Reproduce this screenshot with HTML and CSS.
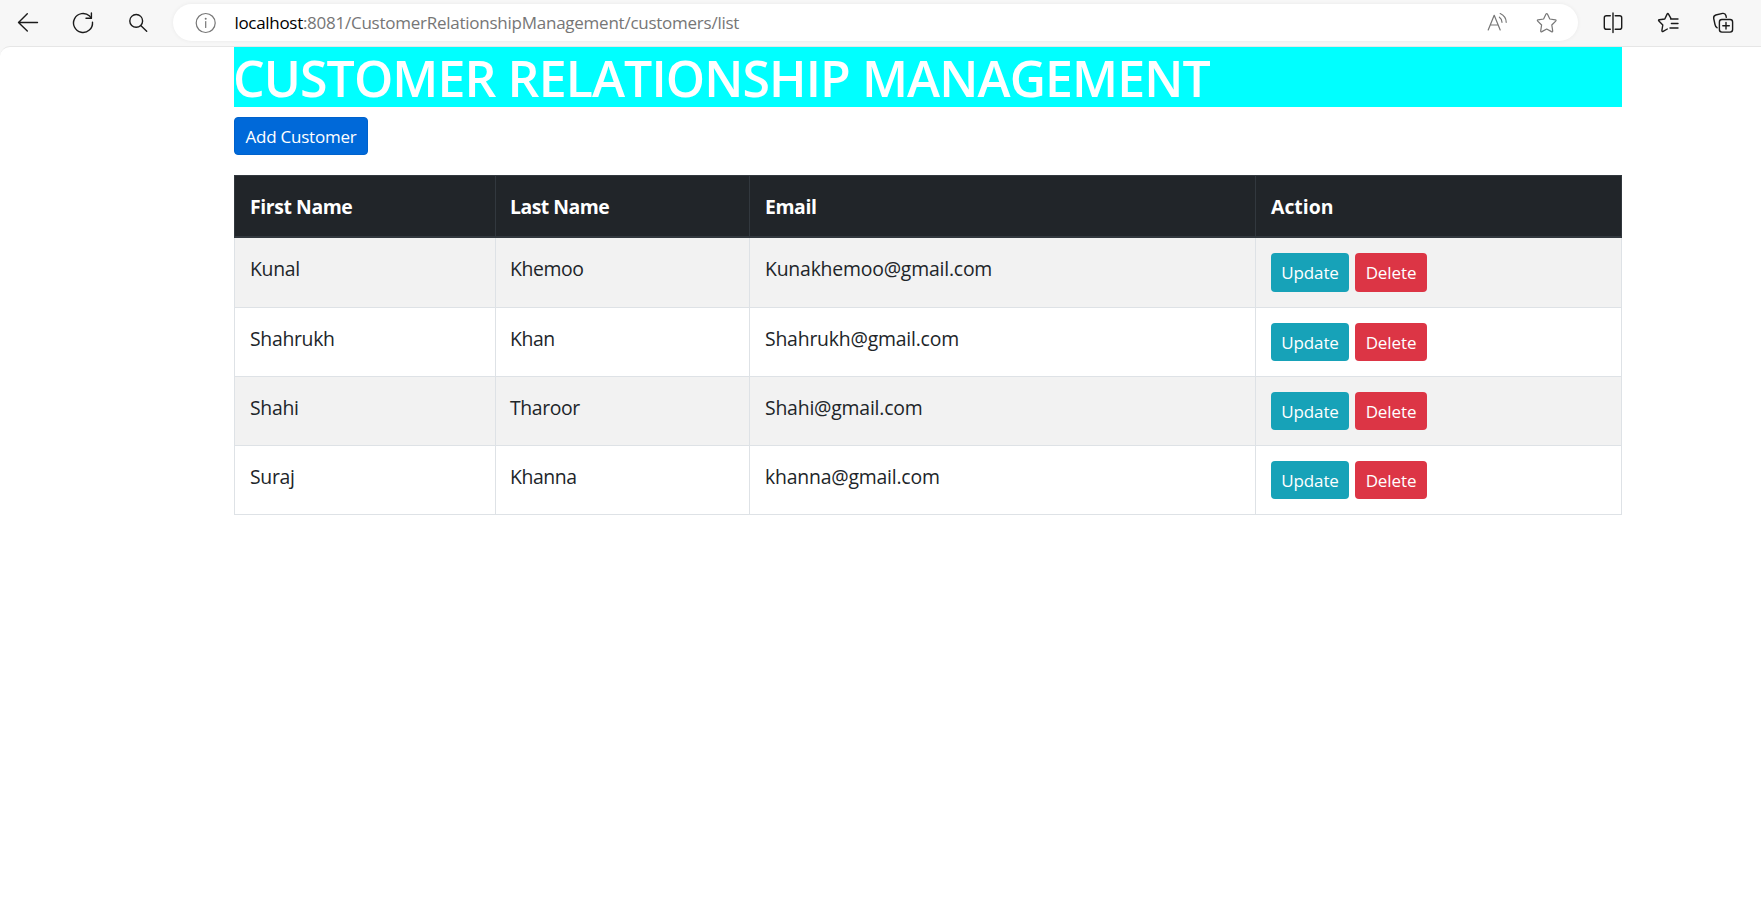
FILE: index.html
```html
<!DOCTYPE html>
<html lang="en">
<head>
<meta charset="utf-8">
<title>Customer Relationship Management</title>
<link rel="stylesheet" href="styles.css">
</head>
<body>
<header class="toolbar">
  <svg class="icon" viewBox="0 0 24 24"><path d="M21.5 11.5H2.5M11.3 2.7L2.5 11.5L11.3 20"/></svg>
  <svg class="icon" viewBox="0 0 24 24"><path d="M21.5 11.2A9.5 9.5 0 1 1 18.6 5.1L20.3 7"/><path d="M20.4 2V7.2H15"/></svg>
  <svg class="icon" viewBox="0 0 24 24"><circle cx="9.2" cy="9.9" r="6.4"/><path d="M14 14.7L19.7 20.3"/></svg>
  <div class="address">
    <svg class="icon muted" viewBox="0 0 24 24"><circle cx="11.7" cy="12" r="9.5"/><path d="M11.7 10.5V16.5"/><circle class="dot" cx="11.7" cy="7.8" r="1"/></svg>
    <div class="url"><span class="host">localhost</span>:8081/CustomerRelationshipManagement/customers/list</div>
    <svg class="icon muted" viewBox="0 0 24 24"><path d="M3.2 19L9.2 4.3L15.2 19M5.4 14H13M14.4 6.2C16 7.3 17 9 17 11.3M15.2 2.5C19 4.3 21.2 7.5 21.2 11.3"/></svg>
    <svg class="icon muted" viewBox="0 0 24 24"><path d="M11 3.1Q11.7 1.9 12.4 3.1L14.8 8L20.3 8.8Q21.6 9.1 20.7 10.1L16.8 14L17.7 19.8Q17.8 21.2 16.5 20.6L11.7 18L6.9 20.6Q5.6 21.2 5.7 19.8L6.6 14L2.7 10.1Q1.8 9.1 3.1 8.8L8.6 8Z"/></svg>
  </div>
  <svg class="icon" viewBox="0 0 24 24"><path d="M9.3 4.7H5.4Q3.3 4.7 3.3 6.8V16.2Q3.3 18.3 5.4 18.3H9.3M14.2 4.7H18.6Q20.7 4.7 20.7 6.8V16.2Q20.7 18.3 18.6 18.3H14.2M12 2V21.5"/></svg>
  <svg class="icon" viewBox="0 0 24 24"><path d="M15.2 7.8L12.5 3.1Q11.8 1.9 11.1 3.1L8.8 8L3.3 8.8Q2 9.1 2.9 10.1L6.8 14L5.9 19.4Q5.8 21 7.2 20.3L11.3 18M14.6 8H22M15.4 12.5H22M14 17H22"/></svg>
  <svg class="icon" viewBox="0 0 24 24"><rect x="8.4" y="8.5" width="13.2" height="12.6" rx="2.5"/><path d="M15 11.5V18M11.8 14.8H18.3M6.2 16.8Q4.5 16 4 13.5L2.7 7.5Q2.3 4.8 4.8 4L11.6 2.4Q14.3 2 14.9 4.5L15.3 6.3"/></svg>
</header>
<main class="page">
  <div class="container">
    <h1 class="title">CUSTOMER RELATIONSHIP MANAGEMENT</h1>
    <button class="btn add">Add Customer</button>
    <table class="customers">
      <thead>
        <tr><th class="first">First Name</th><th class="last">Last Name</th><th class="email">Email</th><th class="action">Action</th></tr>
      </thead>
      <tbody>
        <tr><td class="first">Kunal</td><td class="last">Khemoo</td><td class="email">Kunakhemoo@gmail.com</td><td class="action"><div class="actions"><a class="btn update">Update</a><a class="btn delete">Delete</a></div></td></tr>
        <tr><td class="first">Shahrukh</td><td class="last">Khan</td><td class="email">Shahrukh@gmail.com</td><td class="action"><div class="actions"><a class="btn update">Update</a><a class="btn delete">Delete</a></div></td></tr>
        <tr><td class="first">Shahi</td><td class="last">Tharoor</td><td class="email">Shahi@gmail.com</td><td class="action"><div class="actions"><a class="btn update">Update</a><a class="btn delete">Delete</a></div></td></tr>
        <tr><td class="first">Suraj</td><td class="last">Khanna</td><td class="email">khanna@gmail.com</td><td class="action"><div class="actions"><a class="btn update">Update</a><a class="btn delete">Delete</a></div></td></tr>
      </tbody>
    </table>
  </div>
</main>
</body>
</html>
```
FILE: styles.css
```css
* { box-sizing: border-box; }
body {
  margin: 0;
  height: 910px;
  overflow: hidden;
  background: #f7f7f7;
  color: #212529;
  font-family: "Open Sans", "Noto Sans", sans-serif;
  font-size: 19.4px;
  line-height: 30px;
}

/* Browser toolbar */
.toolbar { display: flex; align-items: center; height: 46px; padding-left: 16px; }
.icon {
  flex: none;
  width: 24px;
  height: 24px;
  margin-right: 31.3px;
  fill: none;
  stroke: #1b1b1b;
  stroke-width: 1.4;
  stroke-linecap: round;
  stroke-linejoin: round;
}
.muted { stroke: #767676; stroke-width: 1.2; }
.dot { fill: #767676; stroke: none; }
.address {
  display: flex;
  flex: none;
  align-items: center;
  width: 1405px;
  height: 37px;
  margin: 0 22.5px 1px -8.5px;
  padding: 1px 19px 0 21px;
  border-radius: 19px;
  background: #fff;
  box-shadow: 0 0 4px rgba(0, 0, 0, .06);
}
.address .icon { margin: 0 0 0 26px; }
.address .icon:first-child { margin: 0 16px 0 0; }
.url { flex: 1; color: #767676; font-size: 17px; letter-spacing: -.25px; white-space: nowrap; }
.host { color: #000; letter-spacing: -.3px; }

/* Page */
.page {
  height: 864px;
  border-top: 1px solid #e6e6e6;
  border-top-left-radius: 10px;
  background: #fff;
}
.container { width: 1388px; margin-left: 234px; }
.title {
  height: 60px;
  margin: 0 0 10px;
  background: #0ff;
  color: #fff;
  font-size: 50px;
  font-weight: 550;
  line-height: 62px;
  letter-spacing: -.91px;
  text-indent: -1px;
  white-space: nowrap;
}
.btn {
  display: flex;
  align-items: center;
  justify-content: center;
  height: 38px;
  padding: 1px 0 0;
  border: 0;
  border-radius: 4px;
  color: #fff;
  font: 400 17px/26px "Open Sans", sans-serif;
  letter-spacing: -.1px;
}
.add { width: 134px; margin-bottom: 20px; background: #0069d9; border: 1px solid #0062cc; letter-spacing: -.22px; }
.update { width: 78px; background: #17a2b8; }
.delete { width: 72px; background: #dc3545; }

.customers {
  width: 1388px;
  table-layout: fixed;
  border-collapse: separate;
  border-spacing: 0;
}
.customers th, .customers td {
  padding: 16px 15px 0;
  border: solid #dee2e6;
  border-width: 0 1px 1px 0;
  text-align: left;
  vertical-align: top;
}
.customers th {
  height: 63px;
  border-color: #32383e;
  border-width: 1px 1px 2px 0;
  background: #212529;
  color: #fff;
  font-weight: 700;
}
.customers td { height: 69px; }
.customers tbody tr:first-child td { height: 70px; }
.customers tbody tr:nth-child(odd) td { background: #f2f2f2; }
.customers tbody tr:first-child .btn { height: 39px; }
.customers .first { width: 262px; border-left-width: 1px; letter-spacing: -.3px; }
.customers .last { width: 254px; padding-left: 14px; letter-spacing: -.4px; }
.customers .email { width: 506px; letter-spacing: -.2px; }
.customers .action { width: 366px; }
.customers td.action { padding-top: 15px; }
.customers th.first, .customers th.last, .customers th.email { letter-spacing: -.4px; }
.customers th.last { letter-spacing: -.5px; }
.actions { display: flex; gap: 6px; }
```
